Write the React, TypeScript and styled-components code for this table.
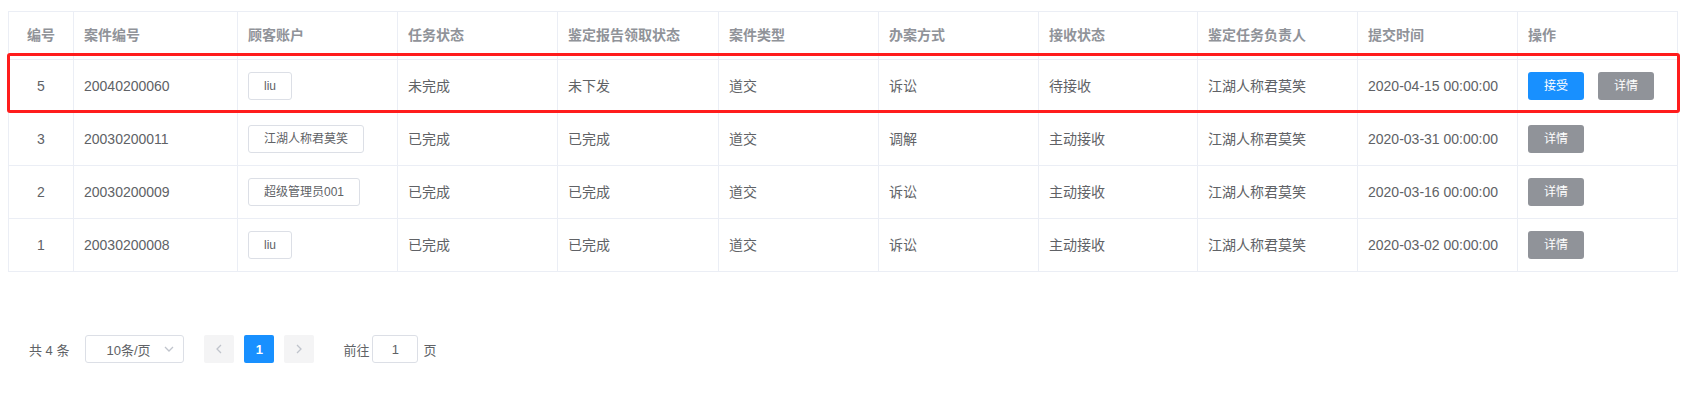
import React from "react";
import styled, { createGlobalStyle } from "styled-components";

const GlobalStyle = createGlobalStyle`
  html, body {
    margin: 0;
    padding: 0;
    background: #fff;
  }
  body {
    font-family: "Liberation Sans", "Noto Sans CJK SC", sans-serif;
    color: #606266;
  }
`;

const Page = styled.div`
  padding: 11px 11px 0 8px;
`;

const TableWrap = styled.div`
  position: relative;
  width: 1669px;
`;

const Table = styled.table`
  width: 1669px;
  table-layout: fixed;
  border-collapse: collapse;
  font-size: 14px;
`;

const HeadCell = styled.th<{ center?: boolean }>`
  height: 48px;
  padding: 0 10px;
  box-sizing: border-box;
  border: 1px solid #ebeef5;
  color: #909399;
  font-weight: 700;
  text-align: ${p => (p.center ? "center" : "left")};
  line-height: 23px;
  white-space: nowrap;
`;

const Cell = styled.td<{ center?: boolean }>`
  height: 53px;
  padding: 0 10px;
  box-sizing: border-box;
  border: 1px solid #ebeef5;
  color: #606266;
  text-align: ${p => (p.center ? "center" : "left")};
  vertical-align: middle;
  line-height: 23px;
  white-space: nowrap;
`;

const TagButton = styled.span`
  display: inline-block;
  height: 28px;
  box-sizing: border-box;
  padding: 0 15px;
  border: 1px solid #dcdfe6;
  border-radius: 3px;
  background: #fff;
  color: #606266;
  font-size: 12px;
  line-height: 26px;
  vertical-align: middle;
`;

const ActionButton = styled.span<{ kind: "primary" | "info" }>`
  display: inline-block;
  width: 56px;
  height: 28px;
  box-sizing: border-box;
  border-radius: 3px;
  background: ${p => (p.kind === "primary" ? "#1890ff" : "#909399")};
  color: #fff;
  font-size: 12px;
  line-height: 28px;
  text-align: center;
  vertical-align: middle;
  & + & {
    margin-left: 14px;
  }
`;

const Highlight = styled.div`
  position: absolute;
  left: -1px;
  top: 42px;
  width: 1673px;
  height: 60px;
  box-sizing: border-box;
  border: 3px solid #ff1c1c;
  border-radius: 3px;
  pointer-events: none;
`;

const Pager = styled.div`
  display: flex;
  align-items: center;
  margin-top: 63px;
  padding-left: 21px;
  font-size: 13px;
  color: #606266;
  height: 28px;
`;

const Total = styled.span`
  margin-right: 16px;
`;

const SizeSelect = styled.div`
  width: 99px;
  height: 28px;
  box-sizing: border-box;
  border: 1px solid #dcdfe6;
  border-radius: 3px;
  display: flex;
  align-items: center;
  justify-content: space-between;
  padding: 0 9px 0 20px;
  margin-right: 20px;
  color: #606266;
`;

const PageBtn = styled.div<{ active?: boolean }>`
  width: 30px;
  height: 28px;
  border-radius: 2px;
  display: flex;
  align-items: center;
  justify-content: center;
  background: ${p => (p.active ? "#1890ff" : "#f4f4f5")};
  color: ${p => (p.active ? "#fff" : "#c0c4cc")};
  font-weight: 700;
  margin-right: 10px;
`;

const Jumper = styled.div`
  display: flex;
  align-items: center;
  margin-left: 19px;
`;

const JumpInput = styled.div`
  width: 46px;
  height: 28px;
  box-sizing: border-box;
  border: 1px solid #dcdfe6;
  border-radius: 3px;
  margin: 0 5px 0 3px;
  display: flex;
  align-items: center;
  justify-content: center;
`;

const columns = [
  { title: "编号", width: 65, center: true },
  { title: "案件编号", width: 164 },
  { title: "顾客账户", width: 160 },
  { title: "任务状态", width: 160 },
  { title: "鉴定报告领取状态", width: 161 },
  { title: "案件类型", width: 160 },
  { title: "办案方式", width: 160 },
  { title: "接收状态", width: 159 },
  { title: "鉴定任务负责人", width: 160 },
  { title: "提交时间", width: 160 },
  { title: "操作", width: 160 },
];

const rows = [
  { id: 5, code: "20040200060", user: "liu", task: "未完成", report: "未下发", type: "道交", mode: "诉讼", recv: "待接收", owner: "江湖人称君莫笑", time: "2020-04-15 00:00:00", accept: true },
  { id: 3, code: "20030200011", user: "江湖人称君莫笑", task: "已完成", report: "已完成", type: "道交", mode: "调解", recv: "主动接收", owner: "江湖人称君莫笑", time: "2020-03-31 00:00:00" },
  { id: 2, code: "20030200009", user: "超级管理员001", task: "已完成", report: "已完成", type: "道交", mode: "诉讼", recv: "主动接收", owner: "江湖人称君莫笑", time: "2020-03-16 00:00:00" },
  { id: 1, code: "20030200008", user: "liu", task: "已完成", report: "已完成", type: "道交", mode: "诉讼", recv: "主动接收", owner: "江湖人称君莫笑", time: "2020-03-02 00:00:00" },
];

const Chevron = ({ dir }: { dir: "left" | "right" | "down" }) => {
  const pts = dir === "left" ? "6,1 2,5 6,9" : dir === "right" ? "2,1 6,5 2,9" : "1,3 5,7 9,3";
  return (
    <svg width={dir === "down" ? 10 : 8} height={10} viewBox={dir === "down" ? "0 0 10 10" : "0 0 8 10"}>
      <polyline points={pts} fill="none" stroke="#c0c4cc" strokeWidth={1.3} />
    </svg>
  );
};

export default function App() {
  return (
    <Page>
      <GlobalStyle />
      <TableWrap>
        <Table>
          <colgroup>
            {columns.map(c => (
              <col key={c.title} style={{ width: c.width }} />
            ))}
          </colgroup>
          <thead>
            <tr>
              {columns.map(c => (
                <HeadCell key={c.title} center={c.center}>
                  {c.title}
                </HeadCell>
              ))}
            </tr>
          </thead>
          <tbody>
            {rows.map(r => (
              <tr key={r.id}>
                <Cell center>{r.id}</Cell>
                <Cell>{r.code}</Cell>
                <Cell>
                  <TagButton>{r.user}</TagButton>
                </Cell>
                <Cell>{r.task}</Cell>
                <Cell>{r.report}</Cell>
                <Cell>{r.type}</Cell>
                <Cell>{r.mode}</Cell>
                <Cell>{r.recv}</Cell>
                <Cell>{r.owner}</Cell>
                <Cell>{r.time}</Cell>
                <Cell>
                  {r.accept && <ActionButton kind="primary">接受</ActionButton>}
                  <ActionButton kind="info">详情</ActionButton>
                </Cell>
              </tr>
            ))}
          </tbody>
        </Table>
        <Highlight />
      </TableWrap>
      <Pager>
        <Total>共 4 条</Total>
        <SizeSelect>
          <span>10条/页</span>
          <Chevron dir="down" />
        </SizeSelect>
        <PageBtn>
          <Chevron dir="left" />
        </PageBtn>
        <PageBtn active>1</PageBtn>
        <PageBtn>
          <Chevron dir="right" />
        </PageBtn>
        <Jumper>
          前往
          <JumpInput>1</JumpInput>
          页
        </Jumper>
      </Pager>
    </Page>
  );
}
